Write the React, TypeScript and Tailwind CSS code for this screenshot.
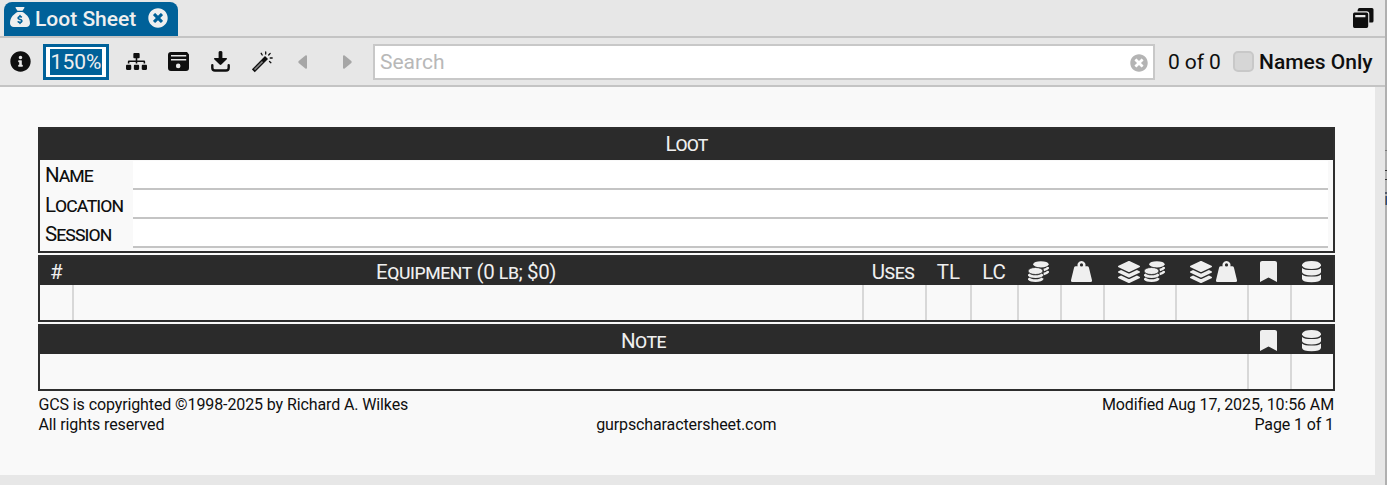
import React from "react";
import { FaInfoCircle, FaSitemap, FaTimesCircle, FaBookmark, FaLayerGroup } from "react-icons/fa";
import { FaSackDollar } from "react-icons/fa6";

const LINE = "border-[#c4c4c4]";

function Label({ children, className = "" }: { children: React.ReactNode; className?: string }) {
  return (
    <span className={`leading-[24px] whitespace-nowrap [font-variant-caps:small-caps] ${className}`}>
      {children}
    </span>
  );
}

function SaveIcon() {
  return (
    <svg width="22" height="20" viewBox="0 0 22 20">
      <path fill="#0f0f0f" fillRule="evenodd" d="M3 0h16l2 2.5V16a3 3 0 0 1-3 3H3a3 3 0 0 1-3-3V3a3 3 0 0 1 3-3zM3 3v1.500h15.200v-1.500zM3 7v1.500h15.200v-1.500zM10.200 11.600a2.300 2.300 0 1 0 0 4.600 2.300 2.300 0 0 0 0-4.600z" />
    </svg>
  );
}

function DownloadIcon() {
  return (
    <svg width="20" height="22" viewBox="0 0 20 22">
      <path fill="#0f0f0f" d="M7.6 1.2Q7.6 0 9.5 0T11.4 1.2V7H15.3Q16.6 7.2 15.8 8.3L10.4 13.6Q9.5 14.4 8.6 13.6L3.2 8.3Q2.4 7.2 3.7 7H7.6z" />
      <path fill="none" stroke="#0f0f0f" strokeWidth="2.4" strokeLinecap="round" d="M1.3 14.2v2.6q0 2.7 2.7 2.7h11q2.7 0 2.7-2.7v-2.6" />
    </svg>
  );
}

function WandIcon() {
  return (
    <svg width="22" height="22" viewBox="0 0 22 22" fill="none" stroke="#0f0f0f" strokeLinecap="round">
      <path strokeWidth="4.200" strokeLinecap="butt" d="M1.300 19.800 14.500 6.600" />
      <path strokeWidth="1.500" stroke="#858585" strokeLinecap="butt" d="M2.500 18.600 10.500 10.600" />
      <path strokeWidth="1.300" d="M9.200 2.300l1 1.700M13.700 1v2M18.200 2.400l-1.500 1.600M18.200 7h2M17.500 10.500l1.400 1.200" />
    </svg>
  );
}

function WindowsIcon() {
  return (
    <svg width="21" height="21" viewBox="0 0 21 21">
      <path fill="#0f0f0f" d="M6.500 0H19q1.500 0 1.500 1.500V13q0 1.500-1.500 1.500h-2.700V6q0-2.700-2.700-2.700H4.500Q4.800 0 6.500 0z" />
      <path fill="#0f0f0f" fillRule="evenodd" d="M1.500 4.500h12q1.700 0 1.700 1.700v12q0 1.700-1.700 1.700h-12Q0 19.900 0 18.200v-12Q0 4.500 1.500 4.500zM2.200 7v2.200h10.200V7z" />
    </svg>
  );
}

function CoinsIcon() {
  return (
    <svg width="21" height="22" viewBox="0 0 21 22">
      <ellipse cx="12.900" cy="3.300" rx="7.700" ry="3.100" fill="#efefef" />
      <path fill="none" stroke="#efefef" strokeWidth="2.600" d="M20.300 6q-.6 2-4.600 2.900M20.300 10q-.6 2-4.600 2.900" />
      <ellipse cx="7.500" cy="10" rx="7.500" ry="3.500" fill="#efefef" stroke="#2b2b2b" strokeWidth=".8" />
      <path fill="none" stroke="#efefef" strokeWidth="2.700" d="M.5 13.200q1.200 2.500 7 2.500t7-2.500M.5 17.200q1.200 2.500 7 2.500t7-2.500" />
    </svg>
  );
}

function WeightIcon() {
  return (
    <svg width="21" height="22" viewBox="0 0 21 22">
      <path fill="#efefef" fillRule="evenodd" d="M10.500 0a4 4 0 0 1 3.800 5.300h1.900q1.300 0 1.700 1.300l3.100 12.600q.4 1.800-1.400 1.800H1.400Q-.4 21 0 19.200L3.100 6.600q.4-1.300 1.700-1.300h1.900A4 4 0 0 1 10.500 0zm0 2.300a1.600 1.600 0 1 0 0 3.200 1.600 1.600 0 0 0 0-3.200z" />
    </svg>
  );
}

function DatabaseIcon() {
  return (
    <svg width="19" height="22" viewBox="0 0 19 22" fill="#efefef">
      <path d="M0 3.400Q2 0 9.500 0T19 3.400V4.800Q17 8 9.500 8T0 4.800z" />
      <path d="M0 6.900Q2.500 9.100 9.500 9.100T19 6.900V11.300Q18 14.400 9.500 14.400T0 11.300zM0 13.400Q2.500 15.600 9.500 15.600T19 13.400V18Q18 21.300 9.500 21.300T0 18z" />
    </svg>
  );
}

const head = "flex items-center justify-center bg-[#2b2b2b] text-[#efefef]";
const CELL_GRID = "grid grid-cols-[34px_790px_63px_45px_47px_43px_43px_72px_72px_43px_41px]";
const HEAD_GRID = "grid grid-cols-[32px_788px_66px_45px_46px_43px_43px_73px_71px_43px_43px]";

function Cells({ grid, count }: { grid: string; count: number }) {
  return (
    <div className={`${grid} h-[35px]`}>
      {Array.from({ length: count }, (_, i) => (
        <div key={i} className={i < count - 1 ? "border-r-2 border-[#d8d8d8]" : ""} />
      ))}
    </div>
  );
}

function Bookmark() {
  return <FaBookmark className="mb-[2px] h-[21px] w-[17px]" preserveAspectRatio="none" />;
}

export default function App() {
  return (
    <div className="flex h-[485px] w-[1387px] overflow-hidden bg-[#e7e7e7] font-[Roboto,sans-serif] text-[#0f0f0f]">
      <div className="flex w-[1385px] flex-col">
        <header className={`flex h-[38px] items-start justify-between border-b-2 ${LINE} pl-1`}>
          <div className="mt-[2px] flex h-[34px] w-[174px] items-center rounded-t-[8px] bg-[#006199] pb-px pl-[6px] text-[#efefef]">
            <FaSackDollar className="mb-[3px] h-[20px] w-[20px]" />
            <span className="ml-[5px] w-[103px] text-[21px] leading-[24px] font-medium whitespace-nowrap">Loot Sheet</span>
            <FaTimesCircle className="mb-[2px] ml-[10px] h-[20px] w-[20px]" />
          </div>
          <div className="mt-[8px] mr-[11px]"><WindowsIcon /></div>
        </header>

        <div className={`flex h-[49px] items-center border-b-2 ${LINE} pl-[10px]`}>
          <FaInfoCircle className="h-[21px] w-[21px]" />
          <div className="ml-[12px] flex h-[36px] w-[66px] items-center justify-center border-[3px] border-[#006199] bg-white">
            <span className="flex h-[26px] w-[52px] items-center justify-center bg-[#006199] pt-[2px] text-[21px] text-[#efefef]">150%</span>
          </div>
          <FaSitemap className="ml-[17px] h-[21px] w-[21px]" />
          <div className="ml-[21px]"><SaveIcon /></div>
          <div className="ml-[21px]"><DownloadIcon /></div>
          <div className="ml-[21px]"><WandIcon /></div>
          <svg className="ml-[24px]" width="9" height="14" viewBox="0 0 9 14"><path fill="#a6a6a6" d="M9 1v12q-.4 1.300-1.600.5L.7 7.900Q0 7 .7 6.100L7.400.5Q8.600-.3 9 1z" /></svg>
          <svg className="ml-[36px]" width="9" height="14" viewBox="0 0 9 14"><path fill="#a6a6a6" d="M0 1v12q.4 1.300 1.600.5l6.700-5.600Q9 7 8.300 6.100L1.600.5Q.4-.3 0 1z" /></svg>
          <div className="ml-[21px] flex h-[36px] w-[782px] items-center justify-between border-2 border-[#c8c8c8] bg-white pr-[5px] pl-[5px]">
            <span className="pt-[3px] text-[21px] text-[#b8b8b8]">Search</span>
            <FaTimesCircle className="mt-[2px] h-[18px] w-[18px] text-[#b4b4b4]" />
          </div>
          <span className="ml-[13px] w-[54px] pt-[2px] text-[21px] tracking-[-0.100px] whitespace-nowrap">0 of 0</span>
          <div className="ml-[11px] h-[21px] w-[21px] rounded-[5px] border-2 border-[#c8c8c8] bg-[#d6d6d6]" />
          <span className="ml-[5px] pt-[2px] text-[21px] font-medium whitespace-nowrap">Names Only</span>
        </div>

        <main className="h-[388px] w-[1375px] bg-[#f9f9f9] pt-[40px] pl-[38px]">
          <section className="h-[126px] w-[1297px] border-2 border-[#2e2e2e]">
            <div className={`${head} h-[31px] pb-[2px]`}><Label className="text-[20.500px] tracking-[-0.900px]">Loot</Label></div>
            <div className="grid grid-cols-[93px_1195px] pt-[0.500px]">
              {["Name", "Location", "Session"].map((name) => (
                <React.Fragment key={name}>
                  <div className="flex h-[29.300px] items-center pt-[0.500px] pl-[5px]"><Label className="text-[20.500px] tracking-[-0.950px]">{name}</Label></div>
                  <div className="border-b-2 border-[#c4c4c4] bg-white" />
                </React.Fragment>
              ))}
            </div>
          </section>

          <section className="mt-[2px] h-[67px] w-[1297px] border-2 border-[#2e2e2e] text-[20.500px] tracking-[-0.450px]">
            <div className={`${head} ${HEAD_GRID} h-[28px] justify-items-center pt-[2px]`}>
              <Label>#</Label>
              <Label>Equipment (0 lb; $0)</Label>
              <Label>Uses</Label>
              <Label className="tracking-normal">TL</Label>
              <Label className="tracking-normal">LC</Label>
              <CoinsIcon />
              <WeightIcon />
              <div className="flex gap-[4px] pl-[4px]"><FaLayerGroup className="h-[22px] w-[22px]" /><CoinsIcon /></div>
              <div className="flex gap-[4px] pl-[4px]"><FaLayerGroup className="h-[22px] w-[22px]" /><WeightIcon /></div>
              <Bookmark />
              <DatabaseIcon />
            </div>
            <Cells grid={CELL_GRID} count={11} />
          </section>

          <section className="mt-[2px] h-[67px] w-[1297px] border-2 border-[#2e2e2e]">
            <div className={`${head} grid h-[28px] grid-cols-[1207px_43px_43px] justify-items-center pt-[2px]`}>
              <Label className="text-[20.500px] tracking-[-0.550px]">Note</Label>
              <Bookmark />
              <DatabaseIcon />
            </div>
            <Cells grid="grid grid-cols-[1209px_43px_41px]" count={3} />
          </section>

          <footer className="grid w-[1296px] grid-cols-3 pt-[4px] pl-[0.500px] text-[16px] leading-[20px] tracking-[-0.110px] whitespace-nowrap">
            <span>GCS is copyrighted ©1998-2025 by Richard A. Wilkes</span>
            <span />
            <span className="text-right">Modified Aug 17, 2025, 10:56 AM</span>
            <span>All rights reserved</span>
            <span className="text-center">gurpscharactersheet.com</span>
            <span className="text-right">Page 1 of 1</span>
          </footer>
        </main>
      </div>
      <aside className="w-[2px] bg-[#b0b0b0] pt-[150px]">
        <div className="h-px bg-[#777]" />
        <div className="mt-[19px] h-[10px] border-y border-[#333]" />
        <div className="mt-[12px] h-[2px] bg-[#555c6b]" />
        <div className="mt-[2px] h-[9px] border-l border-[#8d7055] bg-[#244e91]" />
      </aside>
    </div>
  );
}
